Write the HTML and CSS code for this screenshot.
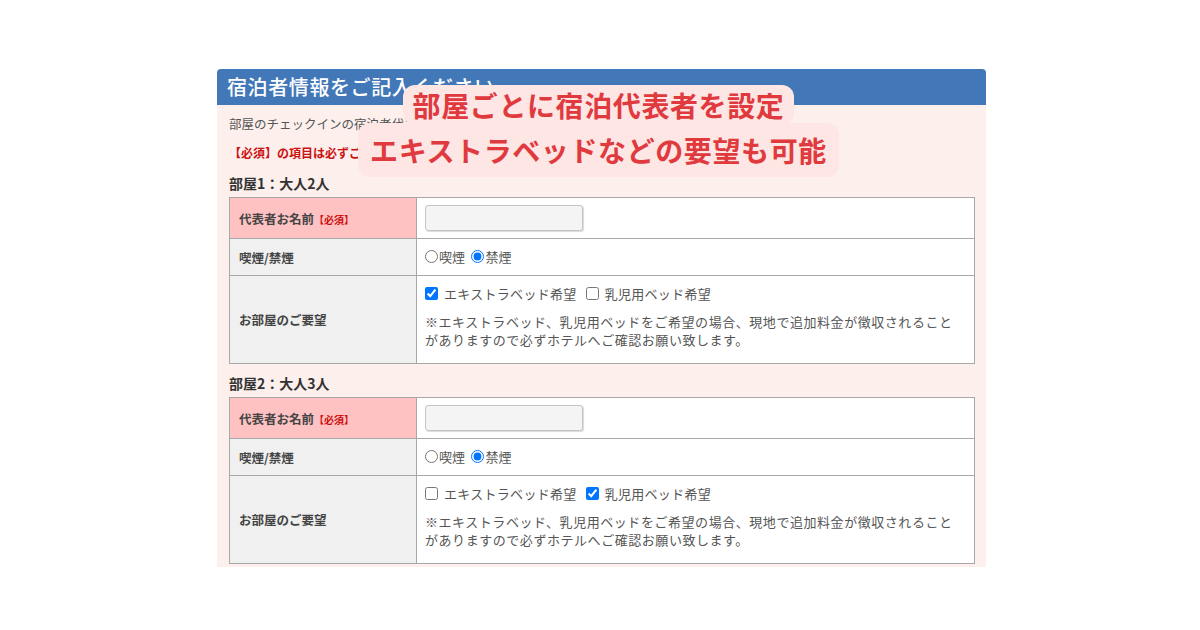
FILE: index.html
```html
<!DOCTYPE html>
<html lang="ja">
<head>
    <meta charset="UTF-8">
    <title>宿泊者情報</title>
    <link rel="stylesheet" href="styles.css">
</head>
<body>
    <div class="panel">
        <h2 class="panel-title">宿泊者情報をご記入ください</h2>

        <div class="panel-body">
            <p class="lead">部屋のチェックインの宿泊者代表の方のお名前をご記入ください。</p>
            <p class="notice">【必須】の項目は必ずご記入ください。</p>

            <h3 class="room-title">部屋1：大人2人</h3>
            <table class="form-table">
                <tr class="row-name">
                    <th class="required">代表者お名前<span class="req">【必須】</span></th>
                    <td><input type="text" class="name-input"></td>
                </tr>
                <tr class="row-smoke">
                    <th>喫煙/禁煙</th>
                    <td>
                        <label class="radio"><input type="radio" name="smoke1">喫煙</label>
                        <label class="radio"><input type="radio" name="smoke1" checked>禁煙</label>
                    </td>
                </tr>
                <tr class="row-request">
                    <th>お部屋のご要望</th>
                    <td>
                        <div class="checks">
                            <label class="check"><input type="checkbox" checked>エキストラベッド希望</label>
                            <label class="check"><input type="checkbox">乳児用ベッド希望</label>
                        </div>
                        <p class="note">※エキストラベッド、乳児用ベッドをご希望の場合、現地で追加料金が徴収されることがありますので必ずホテルへご確認お願い致します。</p>
                    </td>
                </tr>
            </table>

            <h3 class="room-title">部屋2：大人3人</h3>
            <table class="form-table">
                <tr class="row-name">
                    <th class="required">代表者お名前<span class="req">【必須】</span></th>
                    <td><input type="text" class="name-input"></td>
                </tr>
                <tr class="row-smoke">
                    <th>喫煙/禁煙</th>
                    <td>
                        <label class="radio"><input type="radio" name="smoke2">喫煙</label>
                        <label class="radio"><input type="radio" name="smoke2" checked>禁煙</label>
                    </td>
                </tr>
                <tr class="row-request">
                    <th>お部屋のご要望</th>
                    <td>
                        <div class="checks">
                            <label class="check"><input type="checkbox">エキストラベッド希望</label>
                            <label class="check"><input type="checkbox" checked>乳児用ベッド希望</label>
                        </div>
                        <p class="note">※エキストラベッド、乳児用ベッドをご希望の場合、現地で追加料金が徴収されることがありますので必ずホテルへご確認お願い致します。</p>
                    </td>
                </tr>
            </table>
        </div>

        <div class="callout">
            <span class="callout-line line-1">部屋ごとに宿泊代表者を設定</span>
            <span class="callout-line line-2">エキストラベッドなどの要望も可能</span>
        </div>
    </div>
</body>
</html>
```

FILE: styles.css
```css
* {
    margin: 0;
    padding: 0;
    box-sizing: border-box;
}

body {
    font-family: "Noto Sans CJK JP", "Noto Sans", sans-serif;
    background: #ffffff;
    color: #333;
    height: 630px;
    overflow: hidden;
}

.panel {
    position: relative;
    width: 769px;
    margin: 69px 0 0 217px;
}

.panel-title {
    background: #4378b8;
    color: #fff;
    font-size: 20px;
    font-weight: 500;
    height: 36px;
    line-height: 36px;
    padding-left: 10px;
    border-radius: 4px 4px 0 0;
    letter-spacing: 0.6px;
}

.panel-body {
    background: #fcefec;
    padding: 9px 11px 3px 12px;
}

.lead {
    font-size: 12.5px;
    color: #555;
    line-height: 20px;
}

.notice {
    font-size: 12px;
    font-weight: bold;
    color: #cc1111;
    line-height: 20px;
    margin-top: 9px;
}

.room-title {
    font-size: 14px;
    font-weight: bold;
    color: #333;
    line-height: 18px;
    margin-top: 11px;
    margin-bottom: 5px;
}

.form-table + .room-title {
    margin-top: 10px;
}

.form-table {
    width: 100%;
    border-collapse: collapse;
    background: #fff;
}

.form-table th,
.form-table td {
    border: 1px solid #a8a8a8;
    vertical-align: middle;
}

.form-table th {
    width: 187px;
    background: #f0f0f0;
    color: #444;
    text-align: left;
    font-size: 12.5px;
    font-weight: bold;
    padding: 0 9px;
}

.form-table th.required {
    background: #ffc2c2;
}

.req {
    color: #cc1111;
    font-size: 10px;
}

.form-table td {
    padding: 0 8px;
    color: #555;
    font-size: 13px;
    letter-spacing: 0.55px;
}

.row-name {
    height: 41px;
}

.row-smoke {
    height: 37px;
}

.row-request {
    height: 88px;
}

.name-input {
    width: 158px;
    height: 26px;
    background: #f4f4f4;
    border: 1px solid #c4c4c4;
    border-radius: 3px;
    box-shadow: 1px 1px 1px rgba(0, 0, 0, 0.15);
    display: block;
}

.radio {
    display: inline-flex;
    align-items: center;
    letter-spacing: 0;
}

.radio input {
    width: 13px;
    height: 13px;
    margin: 0 1px 0 0;
}

.radio + .radio {
    margin-left: 3px;
}

.checks {
    display: flex;
    gap: 9px;
    margin-top: -6px;
}

.check {
    display: inline-flex;
    align-items: center;
    letter-spacing: 0.3px;
}

.check input {
    width: 13px;
    height: 13px;
    margin: 0 6px 0 0;
}

.note {
    margin-top: 10px;
    line-height: 18px;
    width: 535px;
}

.callout {
    position: absolute;
    left: 138px;
    top: 16px;
    display: flex;
    flex-direction: column;
    align-items: center;
    width: 487px;
}

.callout-line {
    background: #fde6e4;
    color: #e0393e;
    font-size: 28px;
    font-weight: bold;
    border-radius: 12px;
    letter-spacing: 0.6px;
    white-space: nowrap;
}

.line-1 {
    line-height: 40px;
    padding: 0 10px;
}

.line-2 {
    line-height: 54px;
    padding: 0 12px;
    margin-top: -2px;
}
```
